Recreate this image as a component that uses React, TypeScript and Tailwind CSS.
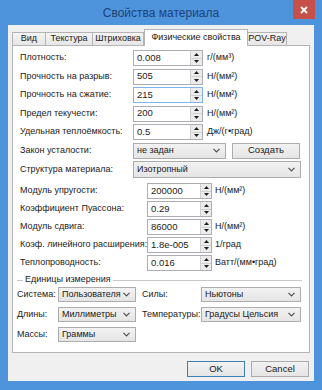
import type { ReactNode } from 'react';

const SANS = "font-['Liberation_Sans',Arial,sans-serif]";

function Arrow({ down }: { down?: boolean }) {
  return (
    <svg width="5" height="3" viewBox="0 0 5 3">
      <path d={down ? 'M0 0 L5 0 L2.5 3 Z' : 'M0 3 L2.5 0 L5 3 Z'} fill="#1e1e1e" />
    </svg>
  );
}

function Chevron() {
  return (
    <svg width="7" height="5" viewBox="0 0 7 5" className="shrink-0">
      <path d="M0.5 0.8 L3.5 3.8 L6.5 0.8" stroke="#505050" strokeWidth="1.2" fill="none" />
    </svg>
  );
}

type SpinProps = {
  value: string;
  inputWidth: string;
  spinWidth: string;
  focused?: boolean;
};

function SpinField({ value, inputWidth, spinWidth, focused }: SpinProps) {
  return (
    <div className={`flex h-[16px] border ${focused ? 'border-[#7eb4ea]' : 'border-[#abadb3]'} bg-white`}>
      <div className={`${inputWidth} flex items-center pl-[3px] text-[9.5px] text-[#1a1a1a]`}>{value}</div>
      <div className={`${spinWidth} flex flex-col border-l border-[#d0d0d0] bg-[#ececec]`}>
        <div className="flex flex-1 items-center justify-center border-b border-[#d0d0d0]">
          <Arrow />
        </div>
        <div className="flex flex-1 items-center justify-center">
          <Arrow down />
        </div>
      </div>
    </div>
  );
}

function Combo({ value, width, height = 'h-[16px]' }: { value: string; width: string; height?: string }) {
  return (
    <div
      className={`${width} ${height} flex items-center justify-between border border-[#acacac] bg-gradient-to-b from-[#f2f2f2] to-[#e5e5e5] pl-[3px] pr-[5px] text-[9px] text-[#1a1a1a]`}
    >
      <span>{value}</span>
      <Chevron />
    </div>
  );
}

function FieldRow({ label, labelWidth, children }: { label: string; labelWidth: string; children: ReactNode }) {
  return (
    <div className="flex h-[16px] items-center">
      <div className={`${labelWidth} shrink-0 text-[9px] text-[#1a1a1a]`}>{label}</div>
      {children}
    </div>
  );
}

function Unit({ text, ml }: { text: string; ml: string }) {
  return <span className={`${ml} text-[9px] text-[#1a1a1a]`}>{text}</span>;
}

const topFields = [
  { label: 'Плотность:', value: '0.008', unit: 'г/(мм³)' },
  { label: 'Прочность на разрыв:', value: '505', unit: 'Н/(мм²)' },
  { label: 'Прочность на сжатие:', value: '215', unit: 'Н/(мм²)', focused: true },
  { label: 'Предел текучести:', value: '200', unit: 'Н/(мм²)' },
  { label: 'Удельная теплоёмкость:', value: '0.5', unit: 'Дж/(г•град)' },
];

const elasticFields = [
  { label: 'Модуль упругости:', value: '200000', unit: 'Н/(мм²)' },
  { label: 'Коэффициент Пуассона:', value: '0.29', unit: '' },
  { label: 'Модуль сдвига:', value: '86000', unit: 'Н/(мм²)' },
  { label: 'Коэф. линейного расширения:', value: '1.8e-005', unit: '1/град' },
  { label: 'Теплопроводность:', value: '0.016', unit: 'Ватт/(мм•град)' },
];

const tabs = [
  { name: 'Вид', width: 'w-[34px]' },
  { name: 'Текстура', width: 'w-[48px]' },
  { name: 'Штриховка', width: 'w-[52px]' },
  { name: 'Физические свойства', width: 'w-[104px]', active: true },
  { name: 'POV-Ray', width: 'w-[40px]' },
];

export default function App() {
  return (
    <div className={`${SANS} flex h-[390px] w-[322px] flex-col whitespace-nowrap bg-[#4d94dc]`}>
      {/* title bar */}
      <div className="relative flex h-[25px] shrink-0 items-center justify-center">
        <span className="text-[12px] text-[#1d4276]">Свойства материала</span>
        <div className="absolute right-[7px] top-0 flex h-[19px] w-[22px] items-center justify-center bg-[#c7504b]">
          <svg width="8" height="8" viewBox="0 0 8 8">
            <path d="M1 1 L7 7 M7 1 L1 7" stroke="#fff" strokeWidth="1.8" />
          </svg>
        </div>
      </div>

      {/* dialog body */}
      <div className="mx-[8px] flex h-[356px] flex-col bg-[#f0f0f0] pt-[4px]">
        <div className="flex h-[16px] items-end pl-[4px]">
          {tabs.map((tab) =>
            tab.active ? (
              <div
                key={tab.name}
                className={`${tab.width} relative z-10 -mb-px flex h-[17px] items-center justify-center border border-b-0 border-[#b4b4b4] bg-white text-[9px] text-[#1a1a1a]`}
              >
                {tab.name}
              </div>
            ) : (
              <div
                key={tab.name}
                className={`${tab.width} -ml-px flex h-[13px] items-center justify-center border border-b-0 border-[#b4b4b4] bg-gradient-to-b from-[#f4f4f4] to-[#e6e6e6] text-[9px] text-[#1a1a1a] first:ml-0`}
              >
                {tab.name}
              </div>
            ),
          )}
        </div>

        {/* tab page */}
        <div className="mx-[4px] flex h-[308px] flex-col border border-[#b4b4b4] bg-white pl-[7px]">
          <div className="mt-[4px] flex flex-col gap-[2.5px]">
            {topFields.map((f) => (
              <FieldRow key={f.label} label={f.label} labelWidth="w-[113px]">
                <SpinField value={f.value} inputWidth="w-[56px]" spinWidth="w-[12px]" focused={f.focused} />
                <Unit text={f.unit} ml="ml-[4px]" />
              </FieldRow>
            ))}
            <FieldRow label="Закон усталости:" labelWidth="w-[113px]">
              <Combo value="не задан" width="w-[93px]" />
              <div className="ml-[6px] flex h-[16px] w-[68px] items-center justify-center border border-[#acacac] bg-gradient-to-b from-[#f2f2f2] to-[#e5e5e5] text-[9.5px] text-[#1a1a1a]">
                Создать
              </div>
            </FieldRow>
            <div className="flex h-[17px] items-center">
              <div className="w-[113px] shrink-0 text-[9px] text-[#1a1a1a]">Структура материала:</div>
              <Combo value="Изотропный" width="w-[168px]" height="h-[17px]" />
            </div>
          </div>

          <div className="mt-[5px] flex flex-col gap-[2px]">
            {elasticFields.map((f) => (
              <FieldRow key={f.label} label={f.label} labelWidth="w-[127px]">
                <SpinField value={f.value} inputWidth="w-[52px]" spinWidth="w-[11px]" />
                {f.unit ? <Unit text={f.unit} ml="ml-[3px]" /> : null}
              </FieldRow>
            ))}
          </div>

          {/* units group */}
          <div className="-ml-[3px] mt-[3px] flex h-[12px] items-center pr-[7px]">
            <div className="h-px w-[6px] bg-[#c8c8c8]" />
            <span className="px-[2px] text-[9px] text-[#1a1a1a]">Единицы измерения</span>
            <div className="h-px flex-1 bg-[#c8c8c8]" />
          </div>
          <div className="-ml-[3px] mt-[1px] flex flex-col gap-[5px]">
            <div className="flex h-[15px] items-center">
              <div className="w-[41px] shrink-0 text-[9px] text-[#1a1a1a]">Система:</div>
              <Combo value="Пользователя" width="w-[78px]" height="h-[15px]" />
              <div className="ml-[6px] w-[59px] shrink-0 text-[9px] text-[#1a1a1a]">Силы:</div>
              <Combo value="Ньютоны" width="w-[100px]" height="h-[15px]" />
            </div>
            <div className="flex h-[15px] items-center">
              <div className="w-[41px] shrink-0 text-[9px] text-[#1a1a1a]">Длины:</div>
              <Combo value="Миллиметры" width="w-[78px]" height="h-[15px]" />
              <div className="ml-[6px] w-[59px] shrink-0 text-[9px] text-[#1a1a1a]">Температуры:</div>
              <Combo value="Градусы Цельсия" width="w-[100px]" height="h-[15px]" />
            </div>
            <div className="flex h-[15px] items-center">
              <div className="w-[41px] shrink-0 text-[9px] text-[#1a1a1a]">Массы:</div>
              <Combo value="Граммы" width="w-[78px]" height="h-[15px]" />
            </div>
          </div>
        </div>

        {/* dialog buttons */}
        <div className="mt-[8px] flex justify-end gap-[6px] pr-[5px]">
          <div className="flex h-[16px] w-[58px] items-center justify-center border border-[#3c7fb1] bg-gradient-to-b from-[#f2f2f2] to-[#e5e5e5] text-[9.5px] text-[#1a1a1a]">
            OK
          </div>
          <div className="flex h-[16px] w-[58px] items-center justify-center border border-[#acacac] bg-gradient-to-b from-[#f2f2f2] to-[#e5e5e5] text-[9.5px] text-[#1a1a1a]">
            Cancel
          </div>
        </div>
      </div>
    </div>
  );
}
